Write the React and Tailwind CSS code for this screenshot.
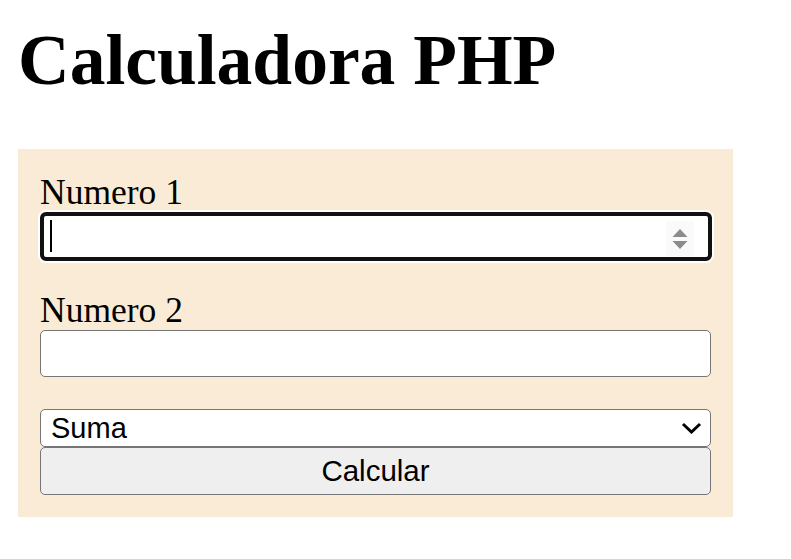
import { useState } from "react";

const serif = { fontFamily: '"Liberation Serif", "Times New Roman", serif' };
const sans = { fontFamily: '"Liberation Sans", Arial, sans-serif' };

function Spinner() {
  return (
    <div className="pointer-events-none absolute right-[14px] top-[5px] flex h-[35px] w-[28px] items-center justify-center bg-[#fafafa]">
      <svg width="16" height="22" viewBox="0 0 16 22">
        <path d="M8 1 L15.5 9 L0.5 9 Z" fill="#8c8c8c" />
        <path d="M0.5 13 L15.5 13 L8 21 Z" fill="#8c8c8c" />
      </svg>
    </div>
  );
}

export default function App() {
  const [a, setA] = useState("");
  const [b, setB] = useState("");
  const [op, setOp] = useState("suma");

  return (
    <div className="min-h-screen bg-white px-[18px] text-black">
      <h1 className="mt-[20px] text-[71.5px] font-bold leading-[80px]" style={serif}>
        Calculadora PHP
      </h1>

      <form
        className="mt-[49px] flex w-[715px] flex-col bg-[#faebd7] px-[22px] pb-[22px] pt-[23px]"
        onSubmit={(e) => e.preventDefault()}
      >
        <label htmlFor="n1" className="block h-[40px] text-[35.5px] leading-[40px]" style={serif}>
          Numero 1
        </label>
        <div className="relative h-[49px] w-[672px] rounded-[6px] border-[4px] border-[#111111] bg-white shadow-[0_0_0_2px_#ffffff]">
          <input
            id="n1"
            type="text"
            value={a}
            onChange={(e) => setA(e.target.value)}
            className="h-full w-full bg-transparent px-[8px] text-[29px] outline-none"
            style={sans}
          />
          <span className="pointer-events-none absolute left-[6px] top-[4px] h-[32px] w-[2px] bg-black" />
          <Spinner />
        </div>

        <label htmlFor="n2" className="mt-[29px] block h-[40px] text-[35.5px] leading-[40px]" style={serif}>
          Numero 2
        </label>
        <input
          id="n2"
          type="text"
          value={b}
          onChange={(e) => setB(e.target.value)}
          className="h-[47px] w-[671px] rounded-[5px] border border-[#767676] bg-white px-[8px] text-[29px] outline-none"
          style={sans}
        />

        <div className="relative mt-[32px] h-[38px] w-[671px]">
          <select
            value={op}
            onChange={(e) => setOp(e.target.value)}
            className="h-full w-full appearance-none rounded-[5px] border border-[#767676] bg-white pl-[10px] text-[29px] leading-[34px] outline-none"
            style={sans}
          >
            <option value="suma">Suma</option>
            <option value="resta">Resta</option>
            <option value="multiplicacion">Multiplicacion</option>
            <option value="division">Division</option>
          </select>
          <svg
            className="pointer-events-none absolute right-[9px] top-[13px]"
            width="21"
            height="12"
            viewBox="0 0 21 12"
          >
            <path d="M2 2 L10.5 10 L19 2" fill="none" stroke="#000" strokeWidth="3" />
          </svg>
        </div>

        <button
          type="submit"
          className="h-[48px] w-[671px] rounded-[5px] border border-[#767676] bg-[#efefef] text-[29.5px] text-black"
          style={sans}
        >
          Calcular
        </button>
      </form>
    </div>
  );
}
